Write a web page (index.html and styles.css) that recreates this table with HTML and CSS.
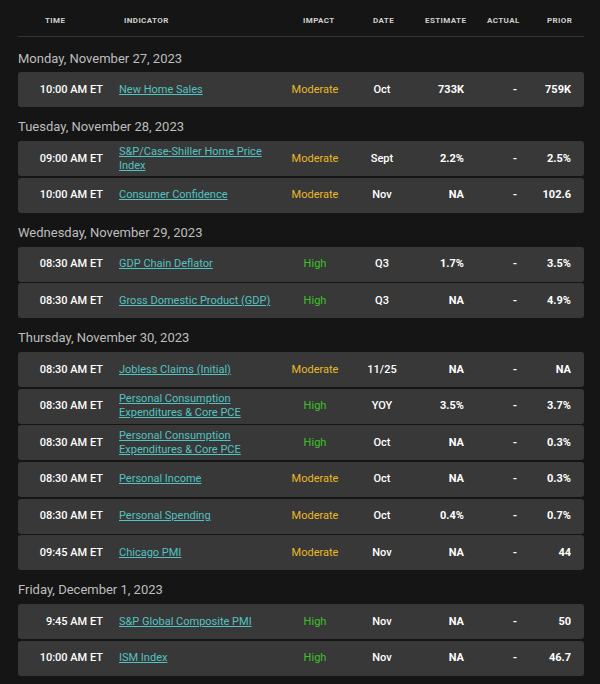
FILE: index.html
```html
<!DOCTYPE html>
<html>
<head>
<meta charset="utf-8">
<link rel="stylesheet" href="styles.css">
</head>
<body>
<div class="cal">
  <div class="head">
    <span>Time</span><span>Indicator</span><span>Impact</span><span>Date</span><span>Estimate</span><span>Actual</span><span>Prior</span>
  </div>

  <div class="day first">Monday, November 27, 2023</div>
  <div class="rows">
    <div class="row"><span class="t">10:00 AM ET</span><a class="ind" href="#">New Home Sales</a><span class="imp mod">Moderate</span><span class="dt">Oct</span><span class="est">733K</span><span class="act">-</span><span class="pr">759K</span></div>
  </div>

  <div class="day">Tuesday, November 28, 2023</div>
  <div class="rows">
    <div class="row"><span class="t">09:00 AM ET</span><a class="ind" href="#">S&amp;P/Case-Shiller Home Price Index</a><span class="imp mod">Moderate</span><span class="dt">Sept</span><span class="est">2.2%</span><span class="act">-</span><span class="pr">2.5%</span></div>
    <div class="row"><span class="t">10:00 AM ET</span><a class="ind" href="#">Consumer Confidence</a><span class="imp mod">Moderate</span><span class="dt">Nov</span><span class="est">NA</span><span class="act">-</span><span class="pr">102.6</span></div>
  </div>

  <div class="day">Wednesday, November 29, 2023</div>
  <div class="rows">
    <div class="row"><span class="t">08:30 AM ET</span><a class="ind" href="#">GDP Chain Deflator</a><span class="imp high">High</span><span class="dt">Q3</span><span class="est">1.7%</span><span class="act">-</span><span class="pr">3.5%</span></div>
    <div class="row"><span class="t">08:30 AM ET</span><a class="ind" href="#">Gross Domestic Product (GDP)</a><span class="imp high">High</span><span class="dt">Q3</span><span class="est">NA</span><span class="act">-</span><span class="pr">4.9%</span></div>
  </div>

  <div class="day">Thursday, November 30, 2023</div>
  <div class="rows">
    <div class="row"><span class="t">08:30 AM ET</span><a class="ind" href="#">Jobless Claims (Initial)</a><span class="imp mod">Moderate</span><span class="dt">11/25</span><span class="est">NA</span><span class="act">-</span><span class="pr">NA</span></div>
    <div class="row"><span class="t">08:30 AM ET</span><a class="ind" href="#">Personal Consumption Expenditures &amp; Core PCE</a><span class="imp high">High</span><span class="dt">YOY</span><span class="est">3.5%</span><span class="act">-</span><span class="pr">3.7%</span></div>
    <div class="row"><span class="t">08:30 AM ET</span><a class="ind" href="#">Personal Consumption Expenditures &amp; Core PCE</a><span class="imp high">High</span><span class="dt">Oct</span><span class="est">NA</span><span class="act">-</span><span class="pr">0.3%</span></div>
    <div class="row"><span class="t">08:30 AM ET</span><a class="ind" href="#">Personal Income</a><span class="imp mod">Moderate</span><span class="dt">Oct</span><span class="est">NA</span><span class="act">-</span><span class="pr">0.3%</span></div>
    <div class="row"><span class="t">08:30 AM ET</span><a class="ind" href="#">Personal Spending</a><span class="imp mod">Moderate</span><span class="dt">Oct</span><span class="est">0.4%</span><span class="act">-</span><span class="pr">0.7%</span></div>
    <div class="row"><span class="t">09:45 AM ET</span><a class="ind" href="#">Chicago PMI</a><span class="imp mod">Moderate</span><span class="dt">Nov</span><span class="est">NA</span><span class="act">-</span><span class="pr">44</span></div>
  </div>

  <div class="day">Friday, December 1, 2023</div>
  <div class="rows">
    <div class="row"><span class="t">9:45 AM ET</span><a class="ind" href="#">S&amp;P Global Composite PMI</a><span class="imp high">High</span><span class="dt">Nov</span><span class="est">NA</span><span class="act">-</span><span class="pr">50</span></div>
    <div class="row"><span class="t">10:00 AM ET</span><a class="ind" href="#">ISM Index</a><span class="imp high">High</span><span class="dt">Nov</span><span class="est">NA</span><span class="act">-</span><span class="pr">46.7</span></div>
  </div>
</div>
</body>
</html>
```

FILE: styles.css
```css
html, body {
  margin: 0;
  padding: 0;
  background: #151515;
}
body {
  font-family: Roboto, "Liberation Sans", sans-serif;
  color: #fff;
}
.cal {
  width: 566px;
  margin-left: 18px;
}
.head {
  display: grid;
  grid-template-columns: 79px 179px 70px 52px 62px 60px 1fr;
  padding: 15px 0 9px 27px;
  border-bottom: 1px solid #343434;
  font-size: 8px;
  line-height: 12px;
  font-weight: 700;
  letter-spacing: 0.4px;
  text-transform: uppercase;
  color: #d0d0d0;
}
.day {
  padding: 12px 0 6px 0;
  font-size: 13px;
  line-height: 16px;
  color: #bdbdbd;
}
.day.first {
  padding-top: 14px;
  padding-bottom: 5px;
}
.rows {
  display: flex;
  flex-direction: column;
  gap: 1.6px;
}
.row {
  display: grid;
  grid-template-columns: 101px 156px 80px 54px 85px 42px 35px;
  align-items: center;
  height: 35px;
  padding-right: 13px;
  background: #383838;
  border-radius: 3px;
  font-size: 11px;
  line-height: 14px;
  font-weight: 500;
}
.t {
  text-align: right;
  padding-right: 16px;
}
.ind {
  color: #52c3c0;
  font-weight: 400;
  text-decoration: underline;
  text-underline-offset: 1px;
}
.imp {
  text-align: center;
  font-weight: 400;
}
.mod { color: #eab926; }
.high { color: #3ec02a; }
.dt { text-align: center; }
.est {
  text-align: right;
  padding-right: 30px;
  font-weight: 700;
}
.act {
  text-align: center;
  font-weight: 700;
}
.pr {
  text-align: right;
  font-weight: 700;
}
```
